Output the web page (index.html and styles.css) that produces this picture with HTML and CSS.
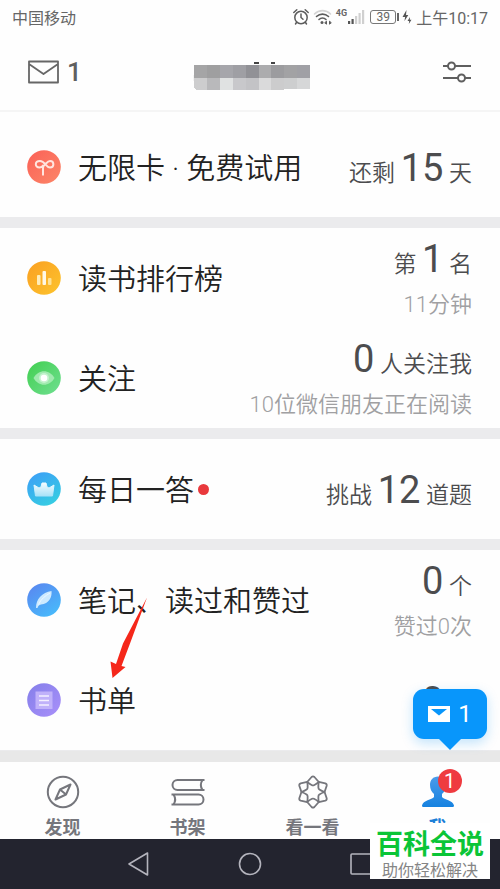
FILE: index.html
```html
<!DOCTYPE html>
<html lang="zh-CN">
<head>
<meta charset="utf-8">
<meta name="viewport" content="width=device-width, initial-scale=1">
<title>我</title>
<link rel="stylesheet" href="styles.css">
</head>
<body>
<div class="screen">
  <div class="status">
    <span class="carrier">中国移动</span>
    <div class="indicators">
      <svg width="18" height="18" viewBox="0 0 18 18" fill="none" stroke="#5c5c5c" stroke-width="1.5" stroke-linecap="round" stroke-linejoin="round"><circle cx="9" cy="9.500" r="6.200"/><path d="M9 6v3.500l2 1.800M1.800 4.500l3-2.800M16.200 4.500l-3-2.800M4.500 14.500l-1 1.500M13.500 14.500l1 1.500"/></svg>
      <svg width="20" height="18" viewBox="0 0 20 18" fill="none" stroke-width="1.600" stroke-linecap="round"><path d="M1.500 6c4.500-4.500 11.500-4.500 16 0" stroke="#d4d4d4"/><path d="M3.500 8.500c3.500-3.200 8.500-3.200 12 0M6 11.500c2-1.800 5-1.800 7 0" stroke="#5c5c5c"/><circle cx="9" cy="14.500" r="1.500" fill="#5c5c5c"/><path d="M12 14.500l1.500-1.300v2.600zM18 14.500l-1.500-1.300v2.600z" fill="#5c5c5c" stroke="#5c5c5c" stroke-width="1"/></svg>
      <div class="network">
        <span>4G</span>
        <svg width="18" height="16" viewBox="0 0 18 16"><path d="M1 12h2.200v3H1zM4.500 10h2.200v5H4.500z" fill="#555"/><path d="M8 7h2.200v8H8zM11.500 4h2.200v11h-2.200zM15 1h2.200v14H15z" fill="#d0d0d0"/></svg>
      </div>
      <span class="battery">39</span>
      <svg width="10" height="16" viewBox="0 0 10 16" fill="#555"><path d="M4.500 1L.5 8h2.600L2.500 12l3.800-6H4z"/><path d="M8 8l-2.500 4h1.700l-.4 3 2.700-4.200H7.800z"/></svg>
      <span class="clock">上午10:17</span>
    </div>
  </div>

  <header class="header">
    <button class="mail" aria-label="私信 1">
      <svg width="32" height="24" viewBox="0 0 32 24" fill="none" stroke="#666" stroke-width="1.800" stroke-linejoin="round"><path d="M1 1.500h29v21H1zM1 4l14.500 10L30 4"/></svg>
      <span>1</span>
    </button>
    <svg width="124" height="40" viewBox="0 -8 124 40" shape-rendering="crispEdges">
      <ellipse cx="14" cy="18" rx="13" ry="12" fill="#f4f4f4"/>
      <path d="M62 2h5v2h-5zM79 2h4v2h-4z" fill="#444"/>
      <path d="M2 5h13v13H2z" fill="#a5a5a6"/><path d="M15 5h13v13H15z" fill="#9f9fa0"/><path d="M28 5h13v13H28z" fill="#a6a6ab"/><path d="M41 5h13v13H41z" fill="#9f9fa4"/><path d="M54 5h13v13H54z" fill="#919196"/><path d="M67 5h12v13H67z" fill="#acacae"/><path d="M79 5h13v13H79z" fill="#9c9c9f"/><path d="M92 5h13v13H92z" fill="#a2a2a4"/><path d="M105 5h13v13h-13z" fill="#a0a0a5"/>
      <path d="M2 18h13v12H5l-3-2z" fill="#cdcdce"/><path d="M15 18h13v12H15z" fill="#b9b9bb"/><path d="M28 18h13v12H28z" fill="#e0e2e2"/><path d="M41 18h13v12H41z" fill="#c8c8cb"/><path d="M54 18h13v12H54z" fill="#c3c3c6"/><path d="M67 18h12v12H67z" fill="#dadadb"/><path d="M79 18h13v12H79z" fill="#cccccd"/><path d="M92 18h13v11H92z" fill="#cdcecf"/><path d="M105 18h13v11h-13z" fill="#d6d7d8"/>
    </svg>
    <button class="settings" aria-label="设置">
      <svg width="30" height="24" viewBox="0 0 30 24" fill="none" stroke="#5f5f5f" stroke-width="2"><path d="M1 6h5M13 6h16M1 18h15M23 18h6"/><circle cx="9.500" cy="6" r="3.500"/><circle cx="19.500" cy="18" r="3.500"/></svg>
    </button>
  </header>

  <main class="groups">
    <section class="group group-first">
      <a class="row" href="#card">
        <svg class="icon" viewBox="0 0 34 34"><defs><linearGradient id="g1" x2="1" y2="1"><stop stop-color="#fb6157"/><stop offset="1" stop-color="#fc8668"/></linearGradient></defs><circle cx="17" cy="17" r="16.800" fill="url(#g1)"/><path d="M16 25.500v-7.500q0-2 2-3.500c2-2 3-3.500 5-3.500 4.500 0 4.500 6.500 0 6.500-4 0-5-6.500-10-6.500-5.500 0-5.500 6.500-.5 6.500 2 0 3-1 4-2.500" fill="none" stroke="#ffe5df" stroke-width="2"/></svg>
        <span class="label">无限卡 · 免费试用</span>
        <span class="side"><span class="value">还剩 <b>15</b> 天</span></span>
      </a>
    </section>
    <section class="group">
      <a class="row" href="#rank">
        <svg class="icon" viewBox="0 0 34 34"><defs><linearGradient id="g2" x2="1" y2="1"><stop stop-color="#fa9f22"/><stop offset="1" stop-color="#fdc42d"/></linearGradient></defs><circle cx="17" cy="17" r="16.800" fill="url(#g2)"/><rect x="10" y="14" width="3.500" height="10" rx="1" fill="#ffedba"/><rect x="15.500" y="10" width="3.500" height="14" rx="1" fill="#fff8e5"/><rect x="21" y="17" width="3.500" height="7" rx="1" fill="#ffe294"/></svg>
        <span class="label">读书排行榜</span>
        <span class="side"><span class="value">第 <b>1</b> 名</span><span class="note">11分钟</span></span>
      </a>
      <a class="row" href="#follow">
        <svg class="icon" viewBox="0 0 34 34"><defs><linearGradient id="g3" x2="1" y2="1"><stop stop-color="#41cf50"/><stop offset="1" stop-color="#70df91"/></linearGradient></defs><circle cx="17" cy="17" r="16.800" fill="url(#g3)"/><path d="M6.500 17c5-9 16-9 21 0-5 9-16 9-21 0z" fill="#a0eaaf"/><circle cx="17" cy="17" r="5" fill="#c5f3cf"/><circle cx="17" cy="17" r="3.300" fill="#fff"/></svg>
        <span class="label">关注</span>
        <span class="side"><span class="value"><b>0</b> 人关注我</span><span class="note">10位微信朋友正在阅读</span></span>
      </a>
    </section>
    <section class="group">
      <a class="row" href="#quiz">
        <svg class="icon" viewBox="0 0 34 34"><defs><linearGradient id="g4" x2="0.600" y2="1"><stop stop-color="#3d9cf8"/><stop offset="1" stop-color="#36cbe3"/></linearGradient><linearGradient id="g4b" x2="0" y2="1"><stop stop-color="#f4fcff"/><stop offset="1" stop-color="#a8e2f8"/></linearGradient></defs><circle cx="17" cy="17" r="16.800" fill="url(#g4)"/><path d="M8.500 24L7 13l5 3 2-1 1-4h4l1 4 2 1 5-3-1.500 11z" fill="url(#g4b)" stroke="url(#g4b)" stroke-width="1" stroke-linejoin="round"/></svg>
        <span class="label">每日一答</span><span class="dot"></span>
        <span class="side"><span class="value">挑战 <b>12</b> 道题</span></span>
      </a>
    </section>
    <section class="group">
      <a class="row" href="#notes">
        <svg class="icon" viewBox="0 0 34 34"><defs><linearGradient id="g5" x2="0.700" y2="1"><stop stop-color="#5b83ef"/><stop offset="1" stop-color="#48b9fb"/></linearGradient></defs><circle cx="17" cy="17" r="16.800" fill="url(#g5)"/><path d="M9 25c0-9 6-15.500 15.500-17 .8 6-2.500 13-10.500 13.500-2 .2-3 2-3.500 3.500z" fill="#cdeaff"/><path d="M11.500 21.500C14 16 18 13 23 10" fill="none" stroke="#eef8ff"/></svg>
        <span class="label">笔记、读过和赞过</span>
        <span class="side"><span class="value"><b>0</b> 个</span><span class="note">赞过0次</span></span>
      </a>
      <a class="row" href="#lists">
        <svg class="icon" viewBox="0 0 34 34"><defs><linearGradient id="g6" x2="1" y2="1"><stop stop-color="#847fe9"/><stop offset="1" stop-color="#a990fa"/></linearGradient></defs><circle cx="17" cy="17" r="16.800" fill="url(#g6)"/><rect x="8.500" y="8.500" width="17" height="17.500" fill="#c0b1fa"/><path d="M12 13h10M12 17.500h10M12 22h10" stroke="#f4f0ff" stroke-width="1.600"/></svg>
        <span class="label">书单</span>
        <span class="side"><span class="value"><b>0</b> 个</span></span>
        <svg class="pointer" width="42" height="84" viewBox="0 0 42 84"><path d="M39 1.500L22 47.500 13.500 70l4 1-13 11-2-16.500 5.500 2.500 7-20.500z" fill="#f5271a"/></svg>
      </a>
    </section>
  </main>

  <nav class="tabs">
    <a class="tab" href="#discover">
      <svg width="34" height="34" viewBox="0 0 34 34" fill="none" stroke="#75767c" stroke-width="2" stroke-linejoin="round"><circle cx="17" cy="17" r="15.200"/><path d="M24.500 9.500l-4.500 10L9.500 24.500l4.500-10zM14 14.500l6 5"/></svg>
      <span>发现</span>
    </a>
    <a class="tab" href="#shelf">
      <svg width="34" height="34" viewBox="0 0 34 34" fill="none" stroke="#75767c" stroke-width="2" stroke-linejoin="round"><path d="M33.500 5H6.500a5 5 0 0 0 0 10h27M31.500 5c-2 3-2 7 0 10M.5 19.500h27a5 5 0 0 1 0 10H.5M2.500 19.500c2 3 2 7 0 10"/></svg>
      <span>书架</span>
    </a>
    <a class="tab" href="#look">
      <svg width="34" height="34" viewBox="0 0 34 34" fill="none" stroke="#75767c" stroke-width="1.800" stroke-linejoin="round"><path id="petal" d="M11.200 7L15.600 2Q17 .8 18.400 2L22.800 7Q20.500 9 18 10.200q-1 .5-2 0Q13.500 9 11.200 7z"/><use href="#petal" transform="rotate(60 17 17)"/><use href="#petal" transform="rotate(120 17 17)"/><use href="#petal" transform="rotate(180 17 17)"/><use href="#petal" transform="rotate(240 17 17)"/><use href="#petal" transform="rotate(300 17 17)"/></svg>
      <span>看一看</span>
    </a>
    <a class="tab tab-active" href="#me">
      <svg width="34" height="34" viewBox="0 0 34 34"><defs><linearGradient id="g7" x2="0" y2="1"><stop stop-color="#4b9bea"/><stop offset="1" stop-color="#1682e0"/></linearGradient></defs><path d="M17 1.500c-5 0-8 3.500-8 8.500 0 4 1.500 7 4 9v3c-2 3-11 3-12 8.500 0 1.200.5 1.500 2 1.500h28c1.500 0 2-.3 2-1.500-1-5.500-10-5.500-12-8.500v-3c2.500-2 4-5 4-9 0-5-3-8.500-8-8.500z" fill="url(#g7)"/></svg>
      <span>我</span>
      <i class="badge">1</i>
      <div class="bubble">
        <svg width="22" height="16" viewBox="0 0 22 16"><path d="M0 0h22v16H0z" fill="#fff"/><path d="M3 3h16l-8 6.500z" fill="#0896fb"/></svg>
        <span>1</span>
      </div>
    </a>
  </nav>

  <div class="system">
    <button aria-label="返回"><svg width="26" height="26" viewBox="0 0 26 26" fill="none" stroke="#b4b4bd" stroke-width="1.600" stroke-linejoin="round"><path d="M21.500 2v22L3 13z"/></svg></button>
    <button aria-label="主页"><svg width="26" height="26" viewBox="0 0 26 26" fill="none" stroke="#b4b4bd" stroke-width="1.600"><circle cx="13" cy="13" r="10.500"/></svg></button>
    <button aria-label="最近任务"><svg width="26" height="26" viewBox="0 0 26 26" fill="none" stroke="#b4b4bd" stroke-width="1.600"><rect x="3" y="3" width="20" height="20" rx="1"/></svg></button>
  </div>

  <div class="watermark"><strong>百科全说</strong><span>助你轻松解决</span></div>
</div>
</body>
</html>
```
FILE: styles.css
```css
* { box-sizing: border-box; }

body {
  margin: 0;
  background: #fefefe;
  color: #222;
  font-family: Roboto, "Noto Sans CJK SC", sans-serif;
}

a { color: inherit; text-decoration: none; }

button {
  padding: 0;
  border: 0;
  background: none;
  color: inherit;
  font: inherit;
}

svg { display: block; flex: none; }

.screen {
  position: relative;
  display: flex;
  flex-direction: column;
  min-height: 100vh;
}

.status {
  display: flex;
  align-items: center;
  justify-content: space-between;
  height: 34px;
  padding: 0 12px;
  color: #666;
  font-size: 16px;
}

.indicators { display: flex; align-items: center; gap: 3px; }

.network { display: flex; align-items: center; }

.network span {
  align-self: flex-start;
  font-size: 9px;
  font-weight: 700;
  line-height: 8px;
}

.battery {
  position: relative;
  width: 26px;
  margin: 0 3px 0 2px;
  border: 1px solid #777;
  border-radius: 3px;
  font-size: 12px;
  line-height: 12px;
  text-align: center;
}

.battery::after {
  content: "";
  position: absolute;
  top: 2px;
  right: -4px;
  width: 2px;
  height: 8px;
  background: #666;
}

.clock { margin-left: 1px; }

.header {
  display: flex;
  align-items: center;
  justify-content: space-between;
  height: 78px;
  padding: 0 28px;
  border-bottom: 2px solid #f5f5f5;
}

.mail {
  display: flex;
  align-items: center;
  gap: 7px;
  width: 58px;
  color: #5f5f5f;
  font-size: 26px;
  font-weight: 500;
}

.settings { display: flex; justify-content: flex-end; width: 50px; }

.groups {
  display: flex;
  flex: 1;
  flex-direction: column;
  gap: 11px;
  background: #ebebed;
}

.group { background: #fefefe; }
.group-first { padding-top: 5px; }

.row {
  position: relative;
  display: flex;
  align-items: center;
  height: 100px;
  padding: 0 28px 0 27px;
}

.icon { width: 34px; height: 34px; margin-right: 17px; }

.label {
  padding-top: 3px;
  font-size: 29px;
  font-weight: 350;
  line-height: 40px;
  white-space: nowrap;
}

.dot {
  width: 11px;
  height: 11px;
  margin-left: 4px;
  border-radius: 50%;
  background: #e9393c;
}

.side {
  display: flex;
  flex-direction: column;
  align-items: flex-end;
  margin-left: auto;
  padding-top: 8px;
  color: #4c4c4e;
  white-space: nowrap;
}

.value { font-size: 23px; font-weight: 350; line-height: 40px; }
.value b { font-size: 38px; font-weight: 400; }

.note {
  color: #a0a0a2;
  font-size: 22px;
  font-weight: 350;
  line-height: 40px;
}

.pointer { position: absolute; top: -54px; left: 108px; }

.tabs {
  display: flex;
  height: 77px;
  margin-top: 11px;
  background: #fefefe;
  box-shadow: 0 -11px 0 #e8e8e8;
}

.tab {
  position: relative;
  display: flex;
  flex: 1;
  flex-direction: column;
  align-items: center;
  gap: 7px;
  padding-top: 13px;
  color: #75767c;
  font-size: 18px;
  font-weight: 700;
  line-height: 24px;
}

.tab-active { color: #1b80d8; }

.badge {
  position: absolute;
  top: 7px;
  left: 50%;
  width: 24px;
  height: 24px;
  border-radius: 50%;
  background: #ef3b40;
  color: #fff;
  font-size: 20px;
  font-style: normal;
  font-weight: 400;
  text-align: center;
}

.bubble {
  position: absolute;
  right: 13px;
  bottom: 100px;
  display: flex;
  align-items: center;
  justify-content: center;
  gap: 8px;
  width: 74px;
  height: 50px;
  border-radius: 11px;
  background: #0896fb;
  box-shadow: 0 4px 12px rgba(12, 147, 245, 0.25);
  color: #fff;
  font-size: 24px;
  font-weight: 400;
}

.bubble::after {
  content: "";
  position: absolute;
  top: 50px;
  left: 26px;
  border: 11px solid transparent;
  border-top-color: #0896fb;
  border-bottom: 0;
}

.system {
  display: flex;
  align-items: center;
  justify-content: center;
  gap: 85px;
  height: 50px;
  background: #23242f;
}

.watermark {
  position: absolute;
  right: 10px;
  bottom: 10px;
  display: flex;
  flex-direction: column;
  align-items: center;
  width: 120px;
  height: 56px;
  padding-top: 4px;
  background: #fff;
}

.watermark strong {
  color: #0ac537;
  font-size: 27px;
  font-weight: 700;
  line-height: 36px;
}

.watermark span { color: #858585; font-size: 16px; line-height: 16px; }
```
